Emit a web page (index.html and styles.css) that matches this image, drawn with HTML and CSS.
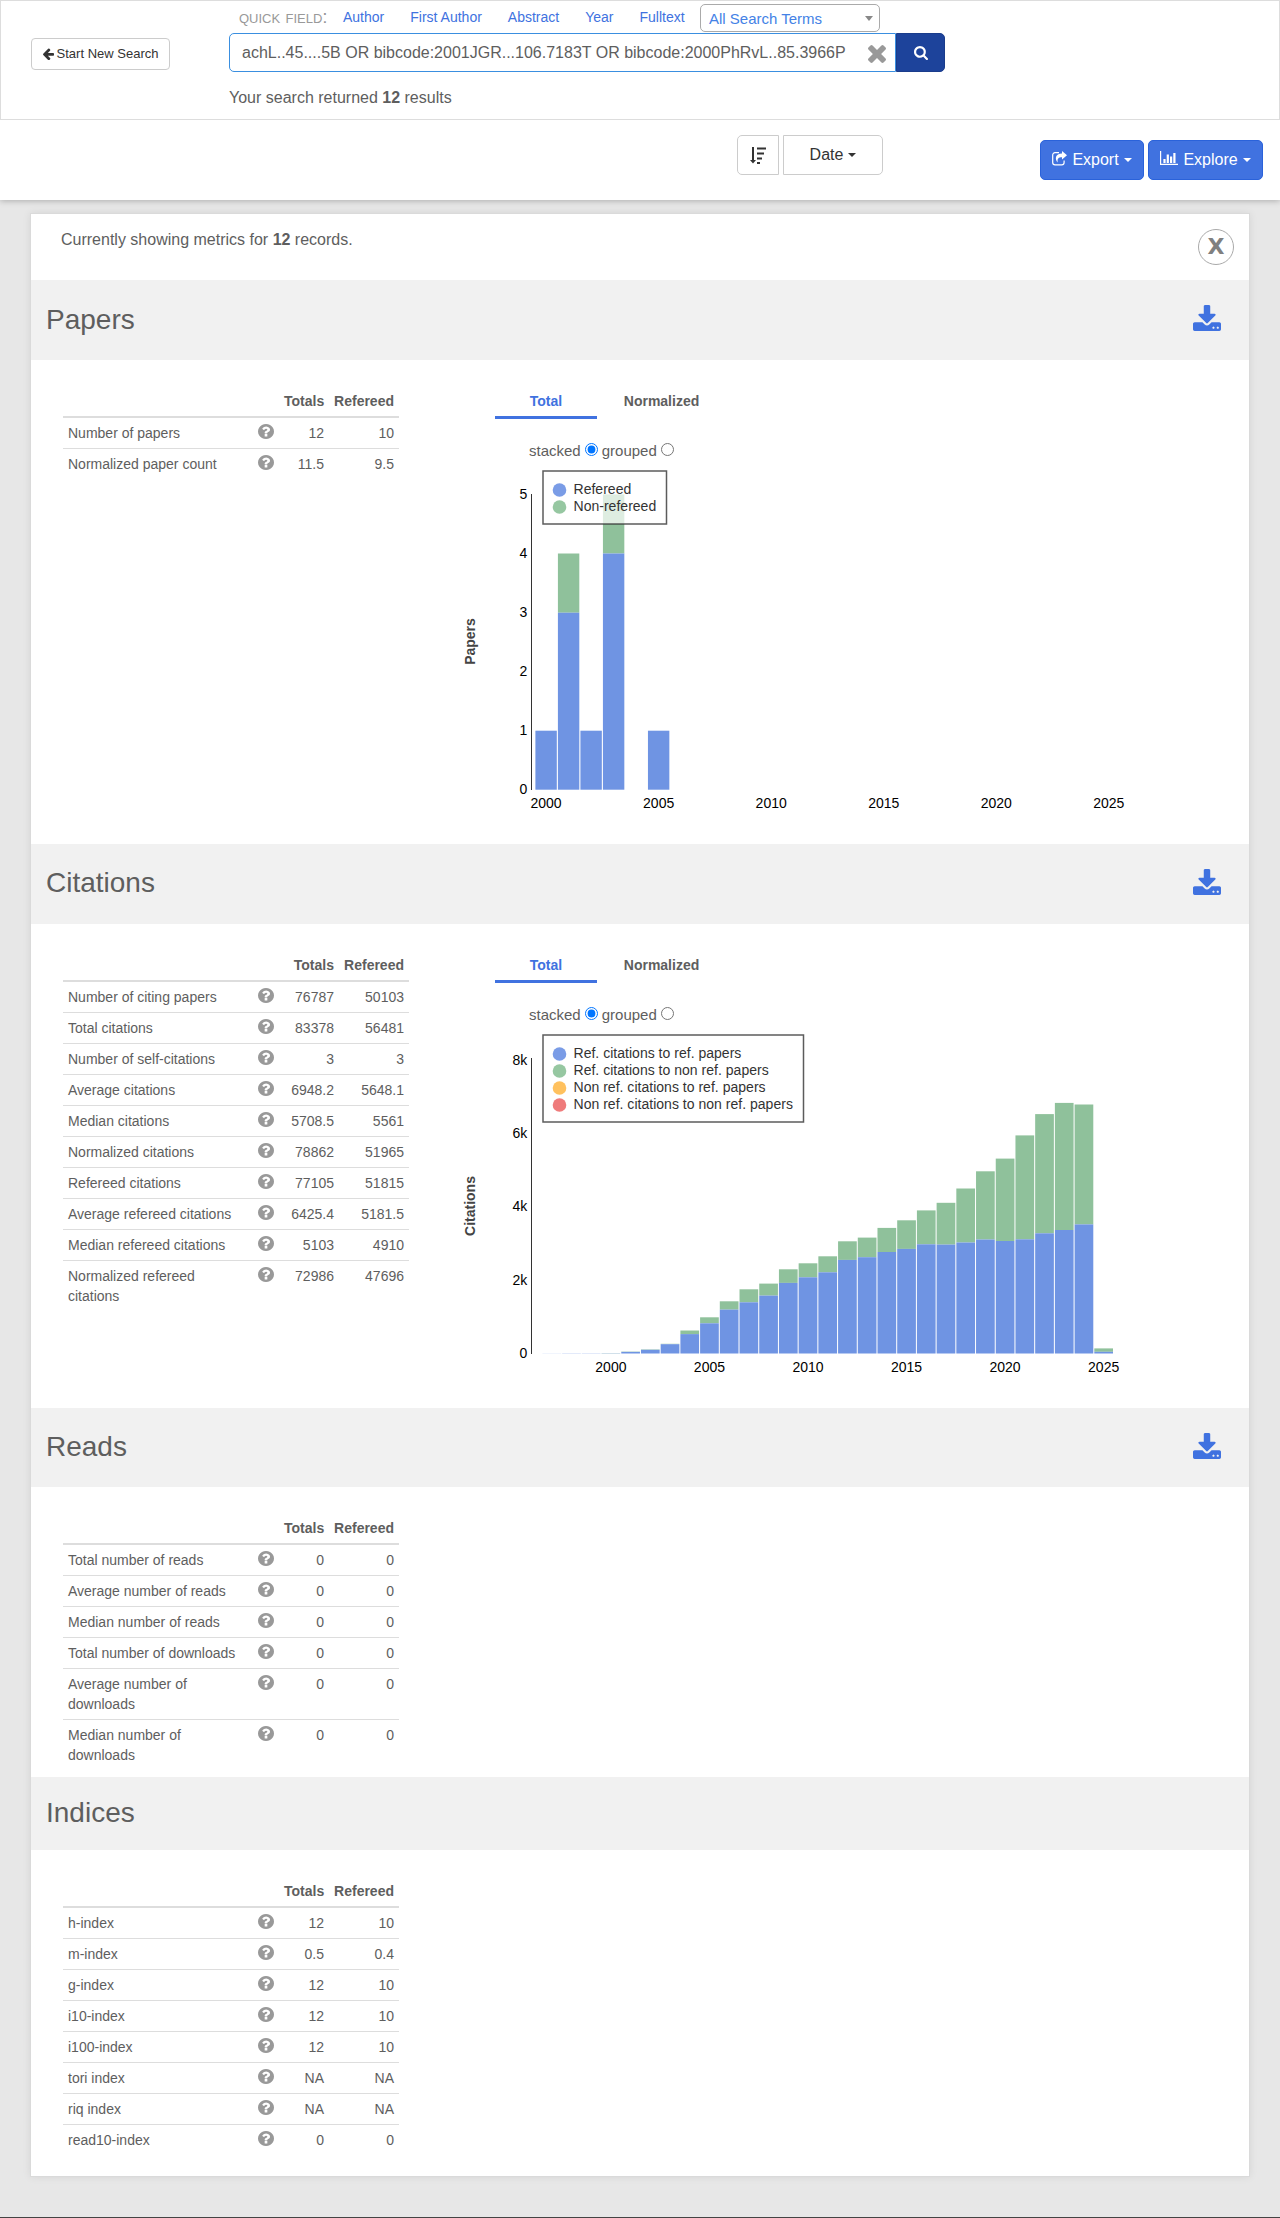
FILE: index.html
```html
<!DOCTYPE html>
<html lang="en">
<head>
<meta charset="utf-8">
<title>Metrics</title>
<link rel="stylesheet" href="styles.css">
</head>
<body>
<svg class="sprite" aria-hidden="true">
  <symbol id="i-help" viewBox="128 128 1536 1536" preserveAspectRatio="none"><path d="M1024 1376v-192q0-14-9-23t-23-9h-192q-14 0-23 9t-9 23v192q0 14 9 23t23 9h192q14 0 23-9t9-23zm256-672q0-88-55.500-163t-138.500-116-170-41q-243 0-371 213-15 24 8 42l132 100q7 6 19 6 16 0 25-12 53-68 86-92 34-24 86-24 48 0 85.500 26t37.500 59q0 38-20 61t-68 45q-63 28-115.500 86.500t-52.500 125.500v36q0 14 9 23t23 9h192q14 0 23-9t9-23q0-19 21.500-49.500t54.500-49.500q32-18 49-28.500t46-35 44.500-48 28-60.500 12.500-81zm384 192q0 209-103 385.500t-279.500 279.500-385.500 103-385.500-103-279.500-279.500-103-385.500 103-385.500 279.500-279.500 385.500-103 385.500 103 279.500 279.500 103 385.500z"/></symbol>
  <symbol id="i-download" viewBox="64 0 1664 1536"><path d="M1344 1344q0-26-19-45t-45-19-45 19-19 45 19 45 45 19 45-19 19-45zm256 0q0-26-19-45t-45-19-45 19-19 45 19 45 45 19 45-19 19-45zm128-224v320q0 40-28 68t-68 28h-1472q-40 0-68-28t-28-68v-320q0-40 28-68t68-28h465l135 136q58 56 136 56t136-56l136-136h464q40 0 68 28t28 68zm-325-569q17 41-14 70l-448 448q-18 19-45 19t-45-19l-448-448q-31-29-14-70 17-39 59-39h256v-448q0-26 19-45t45-19h256q26 0 45 19t19 45v448h256q42 0 59 39z"/></symbol>
</svg>

<header class="topbar">
  <button class="btn btn-start"><svg width="11" height="12" viewBox="64 160 1472 1500"><path d="M1536 896v128q0 53-32.500 90.500t-84.500 37.500h-704l293 294q38 36 38 90t-38 90l-75 76q-37 37-90 37-52 0-91-37l-651-652q-37-37-37-90 0-52 37-91l651-650q38-38 91-38 52 0 90 38l75 74q38 38 38 91t-38 91l-293 293h704q52 0 84.500 37.500t32.500 90.500z"/></svg>Start New Search</button>
  <div class="search">
    <div class="quick">
      <span class="quick-label">quick field:</span>
      <nav class="quick-links"><a>Author</a><a>First Author</a><a>Abstract</a><a>Year</a><a>Fulltext</a></nav>
      <div class="select"><span>All Search Terms</span><i class="caret caret-gray"></i></div>
    </div>
    <div class="search-row">
      <div class="search-input"><span>achL..45....5B OR bibcode:2001JGR...106.7183T OR bibcode:2000PhRvL..85.3966P</span><svg width="18" height="18" viewBox="302 366 1188 1188"><path d="M1490 1322q0 40-28 68l-136 136q-28 28-68 28t-68-28l-294-294-294 294q-28 28-68 28t-68-28l-136-136q-28-28-28-68t28-68l294-294-294-294q-28-28-28-68t28-68l136-136q28-28 68-28t68 28l294 294 294-294q28-28 68-28t68 28l136 136q28 28 28 68t-28 68l-294 294 294 294q28 28 28 68z"/></svg></div>
      <button class="search-btn"><svg width="14" height="14" viewBox="64 128 1664 1664"><path d="M1216 832q0-185-131.500-316.500t-316.500-131.500-316.500 131.500-131.500 316.500 131.500 316.500 316.500 131.500 316.500-131.500 131.500-316.500zm512 832q0 52-38 90t-90 38q-54 0-90-38l-343-342q-179 124-399 124-143 0-273.500-55.500t-225-150-150-225-55.500-273.500 55.500-273.500 150-225 225-150 273.500-55.500 273.500 55.500 225 150 150 225 55.500 273.500q0 220-124 399l343 343q37 37 37 90z"/></svg></button>
    </div>
    <p class="returned">Your search returned <b>12</b> results</p>
  </div>
</header>

<div class="controls">
  <div class="sorting">
    <button class="btn btn-dir"><svg width="16" height="17" viewBox="0 0 16 17"><path d="M2 0h2v13h2L3 16.500 0 13h2zM7 .5h9v2H7zM7 5.500h7v2H7zM7 10.500h5v2H7zM7 15h3v2H7z"/></svg></button>
    <button class="btn btn-date">Date<i class="caret"></i></button>
  </div>
  <div class="actions">
    <button class="btn-blue btn-export"><svg width="15" height="15" viewBox="0 0 15 15"><path d="M7 1.700H3A2.300 2.300 0 0 0 .7 4v7.500A2.300 2.300 0 0 0 3 13.800h6.800a2.300 2.300 0 0 0 2.300-2.300V9.500" fill="none" stroke="currentColor" stroke-width="1.200"/><path d="M10 0l5 4.300-5 4.300V6.200C6.500 6.200 5 7.500 5.800 11.500 2.500 8 3.200 2.400 10 2.400z"/></svg>Export<i class="caret"></i></button>
    <button class="btn-blue btn-explore"><svg width="18" height="15" viewBox="0 0 18 15"><path d="M0 0h1.200v12.800H18V14H0zM3.400 8h2.200v4H3.400zM6.700 3.500h2.200V12H6.700zM10 5.500h2.200V12H10zM13.300 2h2.200v10h-2.200z"/></svg>Explore<i class="caret"></i></button>
  </div>
</div>

<main class="panel">
  <div class="intro"><p>Currently showing metrics for <b>12</b> records.</p><button class="close">X</button></div>

  <section>
    <div class="section-head papers"><h3>Papers</h3><svg class="dl"><use href="#i-download"/></svg></div>
    <div class="section-body tall">
      <table class="metrics">
        <tr><th></th><th></th><th>Totals</th><th>Refereed</th></tr>
        <tr><td>Number of papers</td><td><svg><use href="#i-help"/></svg></td><td>12</td><td>10</td></tr>
        <tr><td>Normalized paper count</td><td><svg><use href="#i-help"/></svg></td><td>11.5</td><td>9.5</td></tr>
      </table>
      <div class="chart-col">
        <div class="tabs"><span class="tab active">Total</span><span class="tab">Normalized</span></div>
        <form class="modes"><label>stacked <input type="radio" name="m" checked></label><label>grouped <input type="radio" name="m"></label></form>
        <svg class="chart" id="papers-chart"></svg>
      </div>
    </div>
  </section>

  <section>
    <div class="section-head"><h3>Citations</h3><svg class="dl"><use href="#i-download"/></svg></div>
    <div class="section-body tall">
      <table class="metrics wide">
        <tr><th></th><th></th><th>Totals</th><th>Refereed</th></tr>
        <tr><td>Number of citing papers</td><td><svg><use href="#i-help"/></svg></td><td>76787</td><td>50103</td></tr>
        <tr><td>Total citations</td><td><svg><use href="#i-help"/></svg></td><td>83378</td><td>56481</td></tr>
        <tr><td>Number of self-citations</td><td><svg><use href="#i-help"/></svg></td><td>3</td><td>3</td></tr>
        <tr><td>Average citations</td><td><svg><use href="#i-help"/></svg></td><td>6948.2</td><td>5648.1</td></tr>
        <tr><td>Median citations</td><td><svg><use href="#i-help"/></svg></td><td>5708.5</td><td>5561</td></tr>
        <tr><td>Normalized citations</td><td><svg><use href="#i-help"/></svg></td><td>78862</td><td>51965</td></tr>
        <tr><td>Refereed citations</td><td><svg><use href="#i-help"/></svg></td><td>77105</td><td>51815</td></tr>
        <tr><td>Average refereed citations</td><td><svg><use href="#i-help"/></svg></td><td>6425.4</td><td>5181.5</td></tr>
        <tr><td>Median refereed citations</td><td><svg><use href="#i-help"/></svg></td><td>5103</td><td>4910</td></tr>
        <tr><td>Normalized refereed citations</td><td><svg><use href="#i-help"/></svg></td><td>72986</td><td>47696</td></tr>
      </table>
      <div class="chart-col">
        <div class="tabs"><span class="tab active">Total</span><span class="tab">Normalized</span></div>
        <form class="modes"><label>stacked <input type="radio" name="m" checked></label><label>grouped <input type="radio" name="m"></label></form>
        <svg class="chart" id="citations-chart"></svg>
      </div>
    </div>
  </section>

  <section>
    <div class="section-head reads"><h3>Reads</h3><svg class="dl"><use href="#i-download"/></svg></div>
    <div class="section-body short">
      <table class="metrics">
        <tr><th></th><th></th><th>Totals</th><th>Refereed</th></tr>
        <tr><td>Total number of reads</td><td><svg><use href="#i-help"/></svg></td><td>0</td><td>0</td></tr>
        <tr><td>Average number of reads</td><td><svg><use href="#i-help"/></svg></td><td>0</td><td>0</td></tr>
        <tr><td>Median number of reads</td><td><svg><use href="#i-help"/></svg></td><td>0</td><td>0</td></tr>
        <tr><td>Total number of downloads</td><td><svg><use href="#i-help"/></svg></td><td>0</td><td>0</td></tr>
        <tr><td>Average number of downloads</td><td><svg><use href="#i-help"/></svg></td><td>0</td><td>0</td></tr>
        <tr><td>Median number of downloads</td><td><svg><use href="#i-help"/></svg></td><td>0</td><td>0</td></tr>
      </table>
    </div>
  </section>

  <section>
    <div class="section-head indices"><h3>Indices</h3></div>
    <div class="section-body last">
      <table class="metrics">
        <tr><th></th><th></th><th>Totals</th><th>Refereed</th></tr>
        <tr><td>h-index</td><td><svg><use href="#i-help"/></svg></td><td>12</td><td>10</td></tr>
        <tr><td>m-index</td><td><svg><use href="#i-help"/></svg></td><td>0.5</td><td>0.4</td></tr>
        <tr><td>g-index</td><td><svg><use href="#i-help"/></svg></td><td>12</td><td>10</td></tr>
        <tr><td>i10-index</td><td><svg><use href="#i-help"/></svg></td><td>12</td><td>10</td></tr>
        <tr><td>i100-index</td><td><svg><use href="#i-help"/></svg></td><td>12</td><td>10</td></tr>
        <tr><td>tori index</td><td><svg><use href="#i-help"/></svg></td><td>NA</td><td>NA</td></tr>
        <tr><td>riq index</td><td><svg><use href="#i-help"/></svg></td><td>NA</td><td>NA</td></tr>
        <tr><td>read10-index</td><td><svg><use href="#i-help"/></svg></td><td>0</td><td>0</td></tr>
      </table>
    </div>
  </section>
</main>
<footer class="footer"></footer>
<script src="charts.js"></script>
</body>
</html>
```
FILE: styles.css
```css
* { box-sizing: border-box; }
body {
  margin: 0;
  background: #e7e7e7;
  color: #5e5e5e;
  font: 14px/20px "Liberation Sans", Arial, sans-serif;
}
button { font-family: inherit; }
p, h3 { margin: 0; font-weight: normal; }
.sprite { display: none; }
svg { fill: currentColor; }

.topbar {
  position: relative;
  z-index: 1;
  display: flex;
  align-items: flex-start;
  height: 120px;
  padding-left: 30px;
  background: #fff;
  border: 1px solid #ddd;
}
.btn {
  display: flex;
  align-items: center;
  justify-content: center;
  padding: 0;
  background: #fff;
  border: 1px solid #ccc;
  color: #333;
}
.btn-start {
  width: 139px;
  height: 32px;
  margin-top: 37px;
  padding-bottom: 1px;
  gap: 3px;
  border-radius: 4px;
  font-size: 13px;
}
.search { width: 716px; margin-left: 59px; }
.quick { display: flex; height: 32px; padding: 3px 0 0 10px; }
.quick-label {
  width: 104px;
  padding-top: 2px;
  color: #999;
  font-size: 19px;
  line-height: 22px;
  font-variant: small-caps;
}
.quick-links { display: flex; gap: 26px; width: 357px; padding-top: 3px; color: #4072e0; }
.select {
  display: flex;
  align-items: center;
  justify-content: space-between;
  width: 180px;
  height: 28px;
  padding: 2px 6px 0 8px;
  border: 1px solid #aaa;
  border-radius: 5px;
  color: #4482e6;
  font-size: 15px;
}
.caret {
  width: 0;
  height: 0;
  border: 4px solid transparent;
  border-top-color: currentColor;
  border-bottom: 0;
}
.caret-gray { margin-bottom: 2px; border-top-width: 5px; color: #888; }
.search-row { display: flex; }
.search-input {
  display: flex;
  align-items: center;
  justify-content: space-between;
  width: 667px;
  height: 39px;
  padding: 0 9px 0 12px;
  border: 1px solid #3a8fe0;
  border-radius: 5px 0 0 5px;
  font-size: 16px;
  white-space: nowrap;
}
.search-input svg { margin-top: 2px; color: #999; }
.search-btn {
  width: 49px;
  height: 39px;
  padding: 0;
  border: 1px solid #1a3c8b;
  border-radius: 0 5px 5px 0;
  background: #1d439b;
  color: #fff;
}
.search-btn svg { display: block; margin: 0 auto; }
.returned { margin-top: 16px; font-size: 16px; }

.controls {
  position: relative;
  display: flex;
  height: 80px;
  padding-left: 737px;
  background: #fff;
  box-shadow: 0 1px 6px rgba(0, 0, 0, .25);
}
.sorting { display: flex; gap: 4px; width: 303px; padding-top: 15px; }
.sorting .btn { height: 40px; font-size: 16px; }
.btn-dir { width: 42px; border-radius: 5px 0 0 5px; }
.btn-date { width: 100px; gap: 5px; border-radius: 0 5px 5px 0; }
.actions { display: flex; gap: 4px; padding-top: 20px; }
.btn-blue {
  display: flex;
  align-items: center;
  justify-content: center;
  gap: 5px;
  height: 40px;
  padding: 0;
  border: 1px solid #2a62da;
  border-radius: 5px;
  background: #4072e0;
  color: #fff;
  font-size: 16px;
}
.btn-export { width: 104px; }
.btn-explore { width: 115px; }
.btn-blue svg { margin-top: -3px; }

.panel {
  width: 1220px;
  height: 1964px;
  margin: 13px 30px 40px;
  background: #fff;
  border: 1px solid #dadada;
  box-shadow: 0 0 8px rgba(0, 0, 0, .08);
}
.intro {
  display: flex;
  justify-content: space-between;
  height: 66px;
  padding: 15px 15px 0 30px;
  font-size: 16px;
}
.intro p { padding-top: 1px; }
.close {
  width: 36px;
  height: 36px;
  padding: 0;
  border: 1px solid #aaa;
  border-radius: 50%;
  background: #fff;
  color: #808080;
  font: bold 22px/34px "DejaVu Sans", sans-serif;
}
.section-head {
  display: flex;
  justify-content: space-between;
  height: 80px;
  padding: 24px 28px 0 15px;
  background: #f1f1f1;
}
.section-head h3 { font-size: 28px; line-height: 30px; }
.dl { width: 28px; height: 26px; margin-top: 1px; color: #4072e0; }
.papers { padding-top: 25px; }
.papers .dl { margin-top: 0; }
.reads { height: 79px; }
.indices { height: 73px; padding-top: 21px; }
.section-body { display: flex; padding: 26px 0 0 32px; }
.tall { height: 484px; }
.short { height: 290px; }

.metrics {
  width: 336px;
  align-self: flex-start;
  table-layout: fixed;
  border-collapse: separate;
  border-spacing: 0;
}
.metrics.wide { width: 346px; }
.metrics th, .metrics td { padding: 5px; vertical-align: top; text-align: right; line-height: 20px; }
.metrics th { height: 32px; border-bottom: 2px solid #ddd; }
.metrics td { border-top: 1px solid #ddd; }
.metrics tr:nth-child(2) td { border-top: 0; }
.metrics th:nth-child(1) { width: 190px; }
.metrics td:nth-child(1) { text-align: left; }
.metrics th:nth-child(2) { width: 26px; }
.metrics th:nth-child(4) { width: 70px; }
.metrics td svg { display: block; width: 16px; height: 15px; margin-top: 1px; color: #999; }

.chart-col { width: 720px; margin-left: 56px; }
.metrics.wide + .chart-col { margin-left: 46px; }
.tabs { display: flex; margin-left: 40px; }
.tab { width: 102px; height: 33px; padding-top: 5px; text-align: center; font-weight: bold; }
.tab + .tab { width: 129px; }
.tab.active { color: #4072e0; border-bottom: 3px solid #4072e0; }
.modes { display: flex; gap: 4px; height: 45px; padding: 22px 0 0 74px; font-size: 15px; }
.modes label { display: flex; gap: 4px; }
.modes input { width: 13px; height: 13px; margin: 2px 0 0; }
.chart { display: block; width: 720px; height: 350px; font-size: 14px; }
.chart .tick { fill: #000; }
.chart .legend-text { fill: #333; letter-spacing: .02px; }
.chart .title { fill: #444; font-weight: bold; }

.footer { height: 1px; background: #444; }
```
FILE: charts.js
```js
// Stacked bar charts: all heights are measured upwards from the baseline.
const NS = "http://www.w3.org/2000/svg";
const BLUE = "#6f94e3", GREEN = "#8fc19b";

function add(svg, name, attrs, text) {
  const el = document.createElementNS(NS, name);
  for (const k in attrs) el.setAttribute(k, attrs[k]);
  if (text !== undefined) el.textContent = text;
  svg.appendChild(el);
}

function draw(id, o) {
  const svg = document.getElementById(id);
  o.bars.forEach(([year, ref, total]) => {
    const x = o.x0 + (year - o.first) * o.pitch;
    add(svg, "rect", { x, y: o.base - total, width: o.width, height: total - ref, fill: GREEN });
    add(svg, "rect", { x, y: o.base - ref, width: o.width, height: ref, fill: BLUE });
  });
  add(svg, "rect", { x: 76, y: o.axisTop, width: 1, height: 326 - o.axisTop, fill: "#333" });
  o.ticks.forEach((t, i) =>
    add(svg, "text", { x: 72.3, y: o.base + o.tickDrop - i * o.step, "text-anchor": "end", class: "tick" }, t));
  o.years.forEach(y =>
    add(svg, "text", { x: o.x0 + (y - o.first) * o.pitch + o.width / 2, y: 344, "text-anchor": "middle", class: "tick" }, y));
  add(svg, "text", { transform: `translate(20 ${o.titleY}) rotate(-90)`, "text-anchor": "middle", class: "title" }, o.title);
  add(svg, "rect", { x: 88, y: 7, width: o.legendWidth, height: 19 + 17 * o.legend.length, fill: "#fff", "fill-opacity": .7, stroke: "#333", "stroke-opacity": .8, "stroke-width": 1.5 });
  o.legend.forEach(([label, color], i) => {
    add(svg, "circle", { cx: 104.5, cy: 26 + i * 17, r: 6.8, fill: color });
    add(svg, "text", { x: 118.5, y: 30 + i * 17, class: "legend-text" }, label);
  });
}

draw("papers-chart", {
  title: "Papers", titleY: 177.5, first: 2000, x0: 80.4, pitch: 22.51, width: 21.4,
  base: 325.7, tickDrop: 4.7, step: 59.07, axisTop: 30, legendWidth: 123.5,
  ticks: ["0", "1", "2", "3", "4", "5"],
  years: [2000, 2005, 2010, 2015, 2020, 2025],
  bars: [[2000, 59, 59], [2001, 177, 236.2], [2002, 59, 59], [2003, 236.2, 295.3], [2005, 59, 59]],
  legend: [["Refereed", "#7a9ce6"], ["Non-refereed", "#96c7a1"]]
});

draw("citations-chart", {
  title: "Citations", titleY: 178, first: 2005, x0: 245.1, pitch: 19.71, width: 18.7,
  base: 325.5, tickDrop: 4.4, step: 73.3, axisTop: 30, legendWidth: 260.5,
  ticks: ["0", "2k", "4k", "6k", "8k"],
  years: [2000, 2005, 2010, 2015, 2020, 2025],
  bars: [
    [1997, .1, .1], [1998, .2, .2], [1999, .2, .2], [2000, .2, .4], [2001, 1.6, 1.9],
    [2002, 3.7, 4.1], [2003, 9.3, 9.7], [2004, 19.4, 23], [2005, 30.2, 36.2],
    [2006, 43.9, 52.2], [2007, 51.2, 64.2], [2008, 57.9, 69.9], [2009, 70.6, 84.2],
    [2010, 76.2, 90.2], [2011, 81.2, 97.2], [2012, 93.6, 112.2], [2013, 96.3, 115.9],
    [2014, 101.5, 125.6], [2015, 104.6, 133.2], [2016, 109.2, 143.1], [2017, 108.9, 150.7],
    [2018, 111, 165], [2019, 114, 182.2], [2020, 112.5, 194.9], [2021, 114.2, 218.1],
    [2022, 120.2, 239.4], [2023, 123.5, 250.6], [2024, 129.1, 249], [2025, 1.7, 5.1]
  ],
  legend: [
    ["Ref. citations to ref. papers", "#7a9ce6"], ["Ref. citations to non ref. papers", "#96c7a1"],
    ["Non ref. citations to ref. papers", "#ffc15e"], ["Non ref. citations to non ref. papers", "#ef7b7b"]
  ]
});
```
